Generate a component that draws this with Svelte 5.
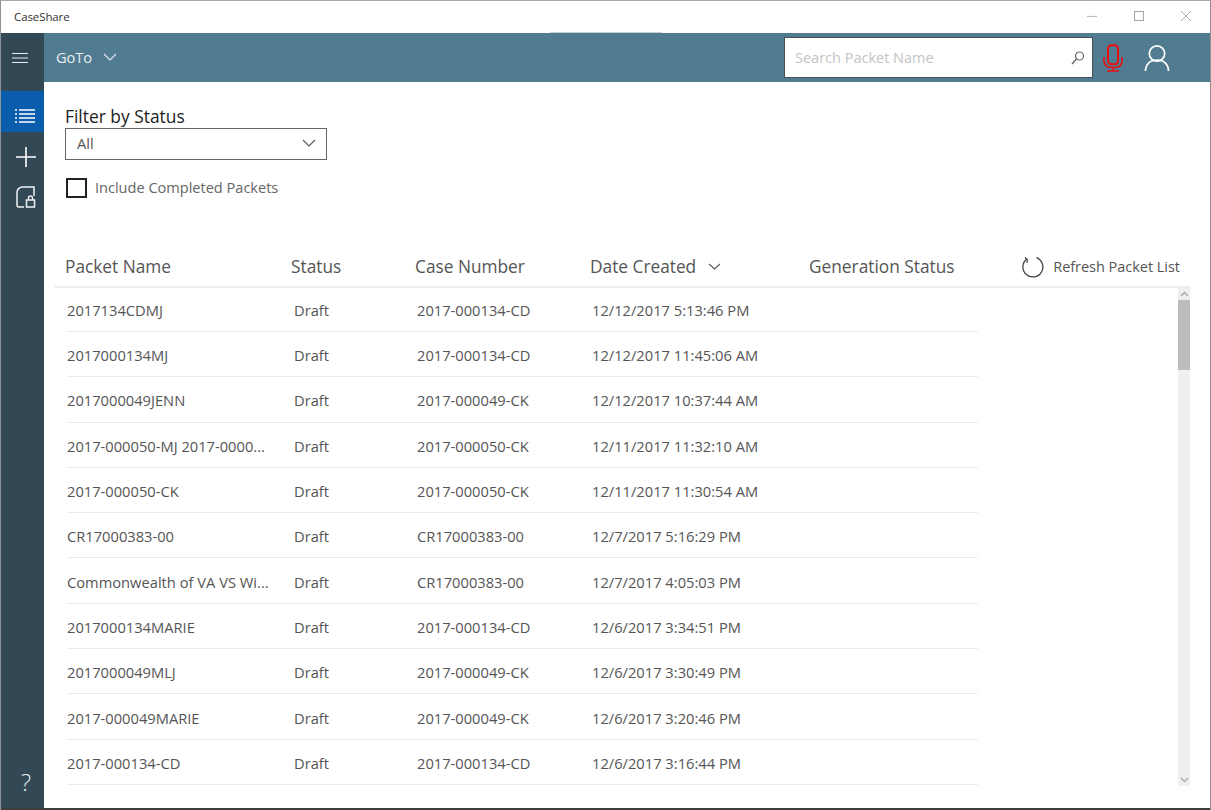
<script>
  const rows = [
    ['2017134CDMJ', '2017-000134-CD', '12/12/2017 5:13:46 PM'],
    ['2017000134MJ', '2017-000134-CD', '12/12/2017 11:45:06 AM'],
    ['2017000049JENN', '2017-000049-CK', '12/12/2017 10:37:44 AM'],
    ['2017-000050-MJ 2017-0000...', '2017-000050-CK', '12/11/2017 11:32:10 AM'],
    ['2017-000050-CK', '2017-000050-CK', '12/11/2017 11:30:54 AM'],
    ['CR17000383-00', 'CR17000383-00', '12/7/2017 5:16:29 PM'],
    ['Commonwealth of VA VS Wi...', 'CR17000383-00', '12/7/2017 4:05:03 PM'],
    ['2017000134MARIE', '2017-000134-CD', '12/6/2017 3:34:51 PM'],
    ['2017000049MLJ', '2017-000049-CK', '12/6/2017 3:30:49 PM'],
    ['2017-000049MARIE', '2017-000049-CK', '12/6/2017 3:20:46 PM'],
    ['2017-000134-CD', '2017-000134-CD', '12/6/2017 3:16:44 PM']
  ];
</script>

<div class="window">
  <div class="titlebar">
    <span class="app-name">CaseShare</span>
    <div class="win-controls">
      <svg width="12" height="12" viewBox="0 0 12 12"><path d="M1 6.5h10" stroke="#bdbdbd" stroke-width="1.2"/></svg>
      <svg width="12" height="12" viewBox="0 0 12 12"><rect x="1.5" y="1.5" width="9" height="9" fill="none" stroke="#a8a8a8" stroke-width="1.1"/></svg>
      <svg width="12" height="12" viewBox="0 0 12 12"><path d="M1 1l10 10M11 1L1 11" stroke="#a8a8a8" stroke-width="1"/></svg>
    </div>
    <span class="sliver"></span>
  </div>
  <div class="body">
    <nav class="rail">
      <button class="rail-btn burger" aria-label="Menu">
        <svg width="18" height="14" viewBox="0 0 18 14"><path d="M1 2.500h16M1 7h16M1 11.500h16" stroke="#e6ecef" stroke-width="1.2"/></svg>
      </button>
      <button class="rail-btn active" aria-label="Packets">
        <svg width="22" height="16" viewBox="0 0 22 16"><path d="M5 2h16M5 6h16M5 10h16M5 14h16" stroke="#fff" stroke-width="1.5"/><path d="M1 2h2M1 6h2M1 10h2M1 14h2" stroke="#fff" stroke-width="1.5"/></svg>
      </button>
      <button class="rail-btn plus" aria-label="Add">
        <svg width="22" height="22" viewBox="0 0 22 22"><path d="M11 1v20M1 11h20" stroke="#fff" stroke-width="1.6"/></svg>
      </button>
      <button class="rail-btn lock" aria-label="Locked">
        <svg width="20" height="22" viewBox="0 0 20 22"><path d="M8 21H3a2 2 0 0 1-2-2V6.500A5.500 5.500 0 0 1 6.500 1H18v9" fill="none" stroke="#eef2f4" stroke-width="1.5"/><rect x="10.500" y="14" width="8" height="7" fill="none" stroke="#eef2f4" stroke-width="1.5"/><path d="M12.500 14v-2a2 2 0 0 1 4 0v2" fill="none" stroke="#eef2f4" stroke-width="1.4"/></svg>
      </button>
      <span class="help">?</span>
    </nav>
    <main class="main">
      <header class="topbar">
        <span class="goto">GoTo</span>
        <svg class="goto-chev" width="14" height="8" viewBox="0 0 14 8"><path d="M1 1l6 6 6-6" fill="none" stroke="#e3ebef" stroke-width="1.1"/></svg>
        <div class="search">
          <span class="placeholder">Search Packet Name</span>
          <svg width="16" height="16" viewBox="0 0 16 16"><circle cx="9.500" cy="6" r="4" fill="none" stroke="#666" stroke-width="1.2"/><path d="M6.500 9l-4.500 5" stroke="#666" stroke-width="1.4"/></svg>
        </div>
        <svg class="mic" width="20" height="28" viewBox="0 0 20 28"><rect x="5" y="1.200" width="10" height="19" rx="3.500" fill="none" stroke="#e81010" stroke-width="2"/><path d="M1 13v4a6.500 6.500 0 0 0 6.500 6.500h5A6.500 6.500 0 0 0 19 17v-4" fill="none" stroke="#e81010" stroke-width="1.6"/><path d="M10 23.500V27M4 27h12" stroke="#e81010" stroke-width="1.6"/></svg>
        <svg class="user" width="26" height="28" viewBox="0 0 26 28"><circle cx="13" cy="9.500" r="7.700" fill="none" stroke="#fff" stroke-width="1.7"/><path d="M1.500 27c0-6.500 4.500-11 11.500-11s11.500 4.500 11.500 11" fill="none" stroke="#fff" stroke-width="1.7"/></svg>
      </header>

      <section class="content">
        <div class="filters">
          <div class="filter-label">Filter by Status</div>
          <div class="select">
            <span>All</span>
            <svg width="14" height="8" viewBox="0 0 14 8"><path d="M1 1l6 6 6-6" fill="none" stroke="#555" stroke-width="1.1"/></svg>
          </div>
          <label class="check">
            <span class="box"></span>
            <span>Include Completed Packets</span>
          </label>
        </div>

        <div class="table-head">
          <span class="h h-name">Packet Name</span>
          <span class="h h-status">Status</span>
          <span class="h h-case">Case Number</span>
          <span class="h h-date">Date Created
            <svg width="13" height="7" viewBox="0 0 13 7"><path d="M1 1l5.500 5 5.500-5" fill="none" stroke="#555" stroke-width="1.1"/></svg>
          </span>
          <span class="h h-gen">Generation Status</span>
          <span class="refresh">
            <svg width="24" height="24" viewBox="0 0 24 24"><path d="M15.500 2.600A10 10 0 1 1 5.500 4.200" fill="none" stroke="#444" stroke-width="1.300"/><path d="M4 2.500l2.300 2.300-.3 3" fill="none" stroke="#444" stroke-width="1.300"/></svg>
            <span>Refresh Packet List</span>
          </span>
        </div>

        <div class="list-wrap">
          <div class="list">
            {#each rows as r}
              <div class="row">
                <span class="c-name">{r[0]}</span>
                <span class="c-status">Draft</span>
                <span class="c-case">{r[1]}</span>
                <span class="c-date">{r[2]}</span>
              </div>
            {/each}
          </div>
          <div class="scrollbar">
            <svg class="arrow" width="9" height="6" viewBox="0 0 9 6"><path d="M1 5l3.500-3.500L8 5" fill="none" stroke="#a6a6a6" stroke-width="1.300"/></svg>
            <div class="thumb"></div>
            <div class="spacer"></div>
            <svg class="arrow" width="9" height="6" viewBox="0 0 9 6"><path d="M1 1l3.500 3.500L8 1" fill="none" stroke="#a6a6a6" stroke-width="1.300"/></svg>
          </div>
        </div>
      </section>
    </main>
  </div>
  <div class="bottom-edge"></div>
</div>

<style>
  :global(body) { margin: 0; background: #fff; }
  .window {
    width: 1211px; height: 810px; box-sizing: border-box;
    display: flex; flex-direction: column; overflow: hidden;
    border-top: 1px solid #a9a9a9; border-left: 1px solid #8a9499; border-right: 1px solid #8f8f8f;
    font-family: "Open Sans", "Noto Sans", sans-serif; color: #555; background: #fff;
  }
  .titlebar { position: relative; height: 32px; flex: none; box-sizing: border-box; padding-bottom: 2px; display: flex; align-items: center; justify-content: space-between; background: #fff; }
  .sliver { position: absolute; left: 549px; bottom: 0; width: 112px; height: 1px; background: #c9cfd2; }
  .app-name { margin-left: 13px; font-size: 11.500px; color: #333; letter-spacing: -0.1px; }
  .win-controls { display: flex; gap: 35px; margin-right: 18px; }
  .body { flex: 1; display: flex; min-height: 0; }
  .rail { width: 43px; flex: none; background: #324955; display: flex; flex-direction: column; align-items: stretch; }
  .rail-btn { border: 0; padding: 0; background: none; display: flex; align-items: center; justify-content: center; }
  .burger { height: 49px; margin-bottom: 9px; padding-right: 6px; }
  .active { height: 41px; background: #0a5cad; padding: 8px 0 0 5px; box-sizing: border-box; }
  .plus { height: 49px; padding-left: 6px; }
  .lock { height: 32px; padding-left: 7px; }
  .help { margin-top: auto; margin-bottom: 11px; padding-left: 7px; text-align: center; color: #e6ecef; font-size: 24px; line-height: 30px; font-weight: 300; }
  .main { flex: 1; min-width: 0; display: flex; flex-direction: column; }
  .topbar { height: 49px; flex: none; background: #517b91; display: flex; align-items: center; box-sizing: border-box; }
  .goto { margin-left: 12px; margin-bottom: 2px; color: #e9eff2; font-size: 14.700px; letter-spacing: -0.1px; }
  .goto-chev { margin-left: 11px; margin-bottom: 2px; }
  .search {
    margin-left: auto; width: 309px; height: 41px; box-sizing: border-box;
    border: 1.500px solid #444f55; background: #fff; display: flex; align-items: center; justify-content: space-between; padding: 0 6px 0 10px;
  }
  .placeholder { color: #c4c4c4; font-size: 14.500px; }
  .mic { margin-left: 10px; }
  .user { margin-left: 21px; margin-right: 40px; }
  .content { flex: 1; min-height: 0; display: flex; flex-direction: column; padding-left: 11px; padding-right: 20px; }
  .filters { padding: 23px 0 0 10px; height: 163px; box-sizing: border-box; flex: none; }
  .filter-label { font-size: 17.400px; line-height: 23px; color: #222; }
  .select {
    width: 262px; height: 32px; box-sizing: border-box; border: 1px solid #666; display: flex; align-items: center; justify-content: space-between;
    padding: 0 10px 2px 11px; font-size: 14.700px; color: #555;
  }
  .check { display: flex; align-items: center; gap: 8px; margin-top: 16px; font-size: 14.550px; color: #666; }
  .box { border: 2px solid #222; box-sizing: border-box; width: 21px; height: 20px; margin: 2px 0 0 1px; }
  .table-head { position: relative; height: 43px; flex: none; border-bottom: 2px solid #ececec; box-sizing: border-box; font-size: 17.300px; color: #555; }
  .h { position: absolute; top: 10px; line-height: 24px; white-space: nowrap; }
  .h-name { left: 10px; }
  .h-status { left: 236px; }
  .h-case { left: 360px; }
  .h-date { left: 535px; }
  .h-date svg { margin-left: 7px; vertical-align: 3px; }
  .h-gen { left: 754px; }
  .refresh { position: absolute; top: 10px; right: 10px; display: flex; align-items: center; gap: 8px; font-size: 14.500px; line-height: 24px; letter-spacing: -0.03px; white-space: nowrap; }
  .list-wrap { flex: 1; min-height: 0; display: flex; }
  .list { flex: 1; min-width: 0; padding: 0 0 0 12px; }
  .row {
    width: 911px; height: 45.300px; box-sizing: border-box; border-bottom: 1px solid #ebebeb; padding-top: 2px;
    display: grid; grid-template-columns: 227px 123px 175px 1fr; align-items: center;
    font-size: 14.700px; color: #555; white-space: nowrap;
  }
  .row:first-child { height: 44px; padding-top: 0; }
  .scrollbar { width: 12px; height: 498px; flex: none; background: #f0f0f0; display: flex; flex-direction: column; align-items: center; }
  .arrow { flex: none; margin: 3px 0; }
  .thumb { width: 100%; height: 70px; background: #bdbdbd; flex: none; }
  .spacer { flex: 1; }
  .bottom-edge { height: 3px; flex: none; background: #3c3c3c; margin: 0 -1px -1px; }
</style>
